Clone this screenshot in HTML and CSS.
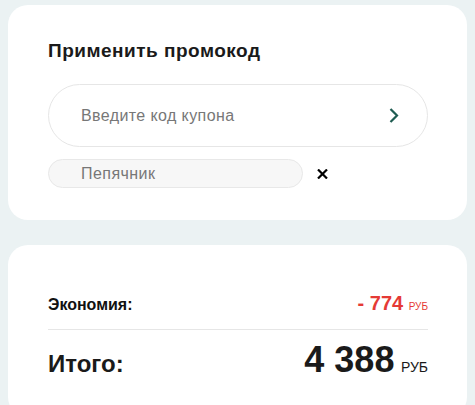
FILE: index.html
```html
<!DOCTYPE html>
<html lang="ru">
<head>
<meta charset="utf-8">
<title>Промокод</title>
<link rel="stylesheet" href="styles.css">
</head>
<body>
  <section class="card promo">
    <h2 class="promo-title">Применить промокод</h2>
    <form class="promo-field">
      <input class="promo-input" type="text" placeholder="Введите код купона">
      <button class="promo-submit" type="button" aria-label="Применить">
        <svg width="10" height="15" viewBox="0 0 10 15"><polyline points="1.5,1 8,7.5 1.5,14" fill="none" stroke="#1f5c52" stroke-width="2.2"/></svg>
      </button>
    </form>
    <div class="applied">
      <span class="applied-chip">Пепячник</span>
      <button class="applied-remove" type="button" aria-label="Удалить">
        <svg width="11" height="10" viewBox="0 0 11 10"><path d="M1 0.5 L10 9.5 M10 0.5 L1 9.5" stroke="#000" stroke-width="2.2"/></svg>
      </button>
    </div>
  </section>

  <section class="card summary">
    <div class="summary-row savings">
      <span class="summary-label">Экономия:</span>
      <span class="summary-value"><b>- 774</b> <small>РУБ</small></span>
    </div>
    <div class="summary-row total">
      <span class="summary-label">Итого:</span>
      <span class="summary-value"><b>4 388</b> <small>РУБ</small></span>
    </div>
  </section>
</body>
</html>
```
FILE: styles.css
```css
html, body {
  background: #ebf2f3;
}

body {
  margin: 5px 8px 0;
  font-family: "Liberation Sans", Arial, sans-serif;
  color: #1a1a1a;
}

.card {
  background: #fff;
  border-radius: 20px;
}

.promo {
  padding: 35px 39px 32px 40px;
}

.promo-title {
  margin: 0;
  font-size: 19px;
  line-height: 22px;
  letter-spacing: 0.5px;
  font-weight: 700;
  color: #1a1a1a;
}

.promo-field {
  margin: 22px 0 0;
  height: 63px;
  box-sizing: border-box;
  border: 1px solid #e6e6e6;
  border-radius: 32px;
  display: flex;
  align-items: center;
  padding: 0 28px 0 32px;
}

.promo-input {
  flex: 1;
  border: 0;
  outline: 0;
  padding: 0;
  background: transparent;
  font-family: inherit;
  font-size: 16px;
  letter-spacing: 0.4px;
  color: #333;
}

.promo-input::placeholder {
  color: #777;
}

.promo-submit {
  border: 0;
  background: none;
  padding: 0;
  display: flex;
  cursor: pointer;
}

.applied {
  margin-top: 12px;
  display: flex;
  align-items: center;
  gap: 14px;
}

.applied-chip {
  width: 255px;
  height: 29px;
  box-sizing: border-box;
  border: 1px solid #e8e8e8;
  border-radius: 15px;
  background: #f7f7f7;
  padding: 0 0 0 32px;
  display: flex;
  align-items: center;
  font-size: 16px;
  letter-spacing: 0.45px;
  color: #777;
}

.applied-remove {
  border: 0;
  background: none;
  padding: 0;
  display: flex;
  cursor: pointer;
}

.summary {
  margin-top: 25px;
  padding: 46px 39px 30px 40px;
}

.summary-row {
  display: flex;
  justify-content: space-between;
  align-items: baseline;
}

.savings {
  line-height: 24px;
  padding-bottom: 10px;
  border-bottom: 1px solid #e6e6e6;
}

.savings .summary-label {
  font-size: 16px;
  font-weight: 700;
  color: #111;
}

.savings .summary-value {
  color: #e53a35;
}

.savings b {
  font-size: 20px;
}

.savings small {
  font-size: 10px;
  margin-left: 1px;
}

.total {
  padding-top: 10px;
  line-height: 40px;
}

.total .summary-label {
  font-size: 24px;
  font-weight: 700;
}

.total b {
  font-size: 36px;
}

.total small {
  font-size: 14px;
  margin-left: 2px;
}
```
